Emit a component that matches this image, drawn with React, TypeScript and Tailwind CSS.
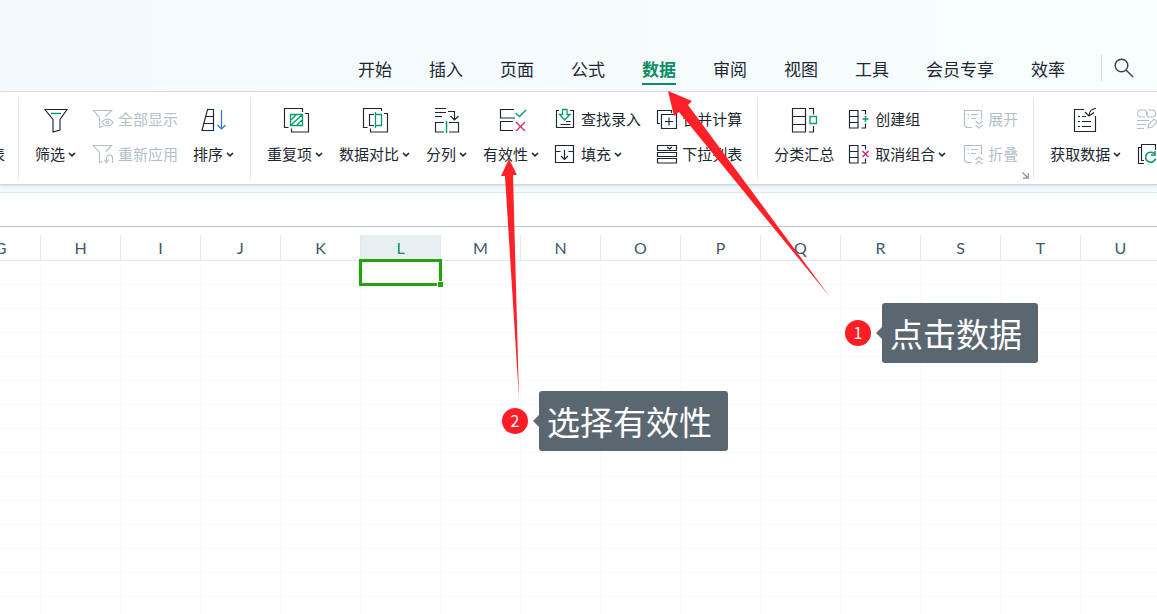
import type { ReactNode } from "react";
import clsx from "clsx";

const TABS = ["开始", "插入", "页面", "公式", "数据", "审阅", "视图", "工具", "会员专享", "效率"];
const COLUMNS = ["G", "H", "I", "J", "K", "L", "M", "N", "O", "P", "Q", "R", "S", "T", "U", "V", "W", "X", "Y", "Z"];
const ROWS = Array.from({ length: 30 }, (_, i) => i + 1);

const GREEN = "#0a9a6c";
const PINK = "#cf2a7b";

/* ---------- Icons ---------- */
function Icon({ size = 20, children }: { size?: number; children: ReactNode }) {
  return (
    <svg
      width={size}
      height={size}
      viewBox={`0 0 ${size} ${size}`}
      fill="none"
      stroke="currentColor"
      strokeWidth="1.15"
      className="shrink-0 overflow-visible"
      aria-hidden="true"
    >
      {children}
    </svg>
  );
}

function Chevron() {
  return (
    <svg width="10" height="10" viewBox="0 0 10 10" fill="none" stroke="currentColor" strokeWidth="1.6" aria-hidden="true">
      <path d="M2 4l3 2.8L8 4" />
    </svg>
  );
}

const icons = {
  filter: (
    <Icon size={26}>
      <path d="M2 2.5H24L17 12.5V23L10 25V12.5Z" />
      <path d="M8 6.5h10" stroke={GREEN} strokeWidth="1.5" />
    </Icon>
  ),
  showAll: (
    <Icon>
      <path d="M13.5 7.5L19.5 1.5h-18l6 7v10l4-1.5" />
      <path d="M10 13.5c2.5-4.5 8.5-4.5 11 0c-2.5 4.5-8.5 4.5-11 0z" />
      <circle cx="15.5" cy="13.5" r="1.5" />
    </Icon>
  ),
  reapply: (
    <Icon>
      <path d="M14 7.5L19.5 1.5h-18l6 7v10l3-1" />
      <path d="M20.5 19v-5a3 3 0 0 0-6 0v4M12 15.5l2.5 3l2.5-3" />
    </Icon>
  ),
  sort: (
    <Icon size={26}>
      <path d="M6.5 2.5H12.5V23.500H1ZM5 9.5h7.500M3 16.5h9.500" />
      <path d="M20.5 3v19M16.5 18l4 4l4-4" stroke="#2270f5" />
    </Icon>
  ),
  duplicate: (
    <Icon size={26}>
      <path d="M5.5 20.5H1.5V1.5h18V5M22 6.500h3.5v18.500H8.500v-3.5" />
      <path d="M7.5 7.5h12v11h-12zM8 13l5-5M8 18l11-10M14 18l5-5" stroke={GREEN} strokeWidth="1.300" />
    </Icon>
  ),
  compare: (
    <Icon size={26}>
      <path d="M5.5 20.500H1.5V1.500h18V4M22 6.500h3.500v18.500H8.500v-3.500M12 7.500H7.500v11H12" />
      <path d="M13.500 5v16M13.500 7.500h6v11h-6" stroke={GREEN} strokeWidth="1.300" />
    </Icon>
  ),
  split: (
    <Icon size={26}>
      <path d="M1 1.500h11M1 5.500h11M1 9.500h7M14 4.500h6.500v8M16.500 9l4 4l4-4M10 15.500H1.500v9.500H10M15 15.500h9.500v9.500H15" />
      <path d="M12.500 14v12" stroke={GREEN} strokeWidth="1.500" />
    </Icon>
  ),
  validity: (
    <Icon size={26}>
      <path d="M15 2.500H1.500v8.500H16M14 14.500H1.500v9H14" />
      <path d="M16.500 6l4 3.500l6.500-6.500" stroke={GREEN} strokeWidth="1.300" />
      <path d="M17 15l9 9M26 15l-9 9" stroke={PINK} strokeWidth="1.300" />
    </Icon>
  ),
  lookup: (
    <Icon>
      <path d="M4 1.500H1.500v17h17v-17H15M5.500 15.500h10M11 12.500h4.500" />
      <path d="M7.500 .500h4.500v5h3L9.700 11L4.500 5.500h3z" stroke={GREEN} strokeWidth="1.300" />
    </Icon>
  ),
  fill: (
    <Icon>
      <path d="M5.500 7.500H.5V1.500h18V7.500H13.500M.5 7.500v11h18v-11M9.500 6v9.500M6 12l3.500 3.500L13 12" />
    </Icon>
  ),
  consolidate: (
    <Icon>
      <path d="M4 14.500H1.500V1.500h14V4M5.500 5.500h15v14h-15zM13 8.500v8M9 12.500h8" />
    </Icon>
  ),
  dropdown: (
    <Icon>
      <path d="M1.500 1.500h19v5h-19zM1.500 8.500h19v4h-19zM1.500 14.500h19v4.500h-19zM11 3l2.500 2l2.500-2" />
    </Icon>
  ),
  subtotal: (
    <Icon size={26}>
      <path d="M1.500 1.500h13v23.500h-13zM1.500 9.500h13M1.500 17.500h13M18 1.500h4.500v6M22.500 19v6H18" />
      <path d="M19 9.500h6.500v7H19z" stroke={GREEN} strokeWidth="1.300" />
    </Icon>
  ),
  group: (
    <Icon>
      <path d="M.5 1.500h8.500v17.500H.5zM.5 7.500h8.500M.5 13.500h8.500M12.500 1.500h4v4M16.500 14.500v4.500h-4" />
      <path d="M16.500 7v6M13.500 10h6" stroke={GREEN} strokeWidth="1.500" />
    </Icon>
  ),
  ungroup: (
    <Icon>
      <path d="M.5 1.500h8.500v17.500H.5zM.5 7.500h8.500M.5 13.500h8.500M12.500 1.500h4v4M16.500 14.500v4.500h-4" />
      <path d="M13.500 7l6 6M19.500 7l-6 6" stroke={PINK} strokeWidth="1.500" />
    </Icon>
  ),
  expand: (
    <Icon>
      <path d="M10 18.500H4.500l-2-2V1.500h17V10M5.500 5.500h1.500M9 5.500h7M5.500 9.500h1.500M9 9.500h5M13.500 12l3.500 3l3.500-3M13.500 16l3.500 3l3.500-3" />
    </Icon>
  ),
  collapse: (
    <Icon>
      <path d="M10 18.500H4.500l-2-2V1.500h17V10M5.500 5.500h1.500M9 5.500h7M5.500 9.500h1.500M9 9.500h5M13.500 16l3.500-3l3.500 3M13.500 20l3.500-3l3.500 3" />
    </Icon>
  ),
  fetch: (
    <Icon size={26}>
      <path d="M11 2.500H1.500v22h21V9M23 1.500c-4 0-6.500 2.500-7 7M12 5l4 4l5-3.500" />
      <path d="M5 9.500h2M9 9.500h4M5 14.500h2M9 14.500h9M5 19.500h2M9 19.500h9" />
    </Icon>
  ),
  editLinks: (
    <Icon>
      <path d="M8 8H4a3.500 3.500 0 0 1 0-7h3a3.500 3.500 0 0 1 3 5M11 1h4a3.500 3.500 0 0 1 0 7h-4a3.500 3.500 0 0 1-1-5M0 11.500h12M0 15.500h9M0 19.500h7M11 19l1-4l5-5l3 3l-5 5z" />
    </Icon>
  ),
  refresh: (
    <Icon>
      <path d="M7 16.500H4.500V.5h14V6M4 3.500H1.500v16H7" />
      <path d="M17 9.500a5 5 0 1 0 1.500 5M18 7v4h-4" stroke={GREEN} strokeWidth="1.600" />
    </Icon>
  ),
};

/* ---------- Ribbon parts ---------- */
function LargeButton({ icon, label, menu }: { icon: ReactNode; label: string; menu?: boolean }) {
  return (
    <button type="button" className="flex flex-col items-center gap-[5px]">
      <span className="flex h-[30px] items-center pt-0.5">{icon}</span>
      <span className="flex h-[30px] items-center gap-0.5 whitespace-nowrap">
        {label}
        {menu && <Chevron />}
      </span>
    </button>
  );
}

function SmallButton({ icon, label, menu, disabled }: { icon: ReactNode; label: string; menu?: boolean; disabled?: boolean }) {
  return (
    <button
      type="button"
      disabled={disabled}
      className={clsx("flex h-[30px] items-center whitespace-nowrap", disabled && "text-[#b3bfc9]")}
    >
      <span className="mr-1.5">{icon}</span>
      {label}
      {menu && <span className="ml-0.5"><Chevron /></span>}
    </button>
  );
}

function Stack({ children }: { children: ReactNode }) {
  return <div className="flex shrink-0 flex-col gap-[5px]">{children}</div>;
}

function Group({ children }: { children: ReactNode }) {
  return (
    <div className="relative flex shrink-0 gap-[15px] border-r border-[#e1e8ee] pt-[7px] pr-[15px] pl-4">{children}</div>
  );
}

function Ribbon() {
  return (
    <div className="flex h-[93px] shrink-0 overflow-hidden border-b border-[#cbd8e2] bg-white py-[5px] text-[15px] text-[#1d2733] shadow-sm">
      <div className="flex w-[19px] shrink-0 items-end justify-end overflow-hidden border-r border-[#e1e8ee] pr-[13px] pb-[10px]">
        <button type="button" className="h-[30px] whitespace-nowrap">表</button>
      </div>
      <Group>
        <LargeButton icon={icons.filter} label="筛选" menu />
        <Stack>
          <SmallButton icon={icons.showAll} label="全部显示" disabled />
          <SmallButton icon={icons.reapply} label="重新应用" disabled />
        </Stack>
        <LargeButton icon={icons.sort} label="排序" menu />
      </Group>
      <Group>
        <LargeButton icon={icons.duplicate} label="重复项" menu />
        <LargeButton icon={icons.compare} label="数据对比" menu />
        <LargeButton icon={icons.split} label="分列" menu />
        <LargeButton icon={icons.validity} label="有效性" menu />
        <Stack>
          <SmallButton icon={icons.lookup} label="查找录入" />
          <SmallButton icon={icons.fill} label="填充" menu />
        </Stack>
        <Stack>
          <SmallButton icon={icons.consolidate} label="合并计算" />
          <SmallButton icon={icons.dropdown} label="下拉列表" />
        </Stack>
      </Group>
      <Group>
        <LargeButton icon={icons.subtotal} label="分类汇总" />
        <Stack>
          <SmallButton icon={icons.group} label="创建组" />
          <SmallButton icon={icons.ungroup} label="取消组合" menu />
        </Stack>
        <Stack>
          <SmallButton icon={icons.expand} label="展开" disabled />
          <SmallButton icon={icons.collapse} label="折叠" disabled />
        </Stack>
        <button type="button" aria-label="分级显示设置" className="absolute right-1 bottom-0 text-[#8492a0]">
          <svg width="7" height="7" viewBox="0 0 7 7" fill="none" stroke="currentColor" strokeWidth="1.2">
            <path d="M.5 .5l5.500 5.500M6.200 1v5.200H1" />
          </svg>
        </button>
      </Group>
      <div className="flex shrink-0 gap-[15px] pt-[7px] pl-4">
        <LargeButton icon={icons.fetch} label="获取数据" menu />
        <Stack>
          <button type="button" disabled aria-label="编辑链接" className="flex h-[30px] items-center text-[#b3bfc9]">{icons.editLinks}</button>
          <button type="button" aria-label="全部刷新" className="flex h-[30px] items-center">{icons.refresh}</button>
        </Stack>
      </div>
    </div>
  );
}

/* ---------- Sheet ---------- */
function Sheet() {
  return (
    <div className="min-h-0 flex-1 overflow-hidden bg-white pt-2">
      <table className="-ml-[39px] w-[1600px] table-fixed border-separate border-spacing-0">
        <thead>
          <tr>
            {COLUMNS.map((col) => (
              <th
                key={col}
                scope="col"
                className={clsx(
                  "h-[26px] w-20 border-r border-b border-[#e0e9ef] p-0 text-center font-[Lato,sans-serif] text-base font-normal",
                  col === "L" ? "bg-[#e8eff3] text-[#0a8f64]" : "text-[#46566a]"
                )}
              >
                {col}
              </th>
            ))}
          </tr>
        </thead>
        <tbody>
          {ROWS.map((row) => (
            <tr key={row}>
              {COLUMNS.map((col) => (
                <td key={col} className="relative h-6 border-r border-b border-[#f4fafd] p-0">
                  {col === "L" && row === 1 && (
                    <div className="absolute -top-0.5 -right-0.5 -bottom-0.5 -left-0.5 z-10 border-3 border-[#22a30a]">
                      <span className="absolute -right-1 -bottom-1 h-1.5 w-1.5 border-t border-l border-white bg-[#22a30a]" />
                    </div>
                  )}
                </td>
              ))}
            </tr>
          ))}
        </tbody>
      </table>
    </div>
  );
}

/* ---------- Annotations ---------- */
function Callout({ step, text, className }: { step: number; text: string; className: string }) {
  return (
    <div className={clsx("absolute z-20 flex items-center", className)}>
      <span className="flex h-[26px] w-[26px] items-center justify-center rounded-full bg-[#ff1c24] pb-0.5 text-base text-white">{step}</span>
      <svg width="6" height="12" viewBox="0 0 6 12" className="ml-[5px]" aria-hidden="true">
        <path d="M6 0v12L0 6z" fill="#5d6a74" />
      </svg>
      <span className="flex h-[60px] items-center whitespace-nowrap rounded-[3px] bg-[#485662]/90 pt-0.5 pr-4 pl-2 text-[33px] text-white">
        {text}
      </span>
    </div>
  );
}

function Arrows() {
  return (
    <svg width="860" height="420" viewBox="0 0 860 420" className="pointer-events-none absolute top-0 left-0 z-20" fill="#ff2127" aria-hidden="true">
      <path d="M668 91L692 101L688 105L830 297L679 112L674 116Z" />
      <path d="M509 159L517 175L513 175L519 399L505 176L501 176Z" />
    </svg>
  );
}

export default function App() {
  return (
    <div className="relative flex h-screen w-full flex-col overflow-hidden bg-[#f3f9fd] font-['Noto_Sans_CJK_SC',sans-serif]">
      <header className="flex h-[92px] shrink-0 items-end border-b border-[#d5e0ea] bg-linear-to-r from-[#f3f9fd] to-[#f8fdfe] pl-[358px] text-[17px] text-[#1d2733]">
        <nav role="tablist" className="flex shrink-0 gap-[37px]">
          {TABS.map((tab) => (
            <button
              key={tab}
              type="button"
              role="tab"
              aria-selected={tab === "数据"}
              className={clsx(
                "mb-1.5 h-[30px] whitespace-nowrap border-b-2 leading-7",
                tab === "数据" ? "border-[#0a8f64] font-bold text-[#0a8f64]" : "border-transparent"
              )}
            >
              {tab}
            </button>
          ))}
        </nav>
        <div className="mb-[10px] ml-9 h-[26px] shrink-0 border-l border-[#cfd8df] pl-3">
          <button type="button" aria-label="搜索" className="flex h-[26px] items-center">
            <svg width="20" height="20" viewBox="0 0 20 20" fill="none" stroke="#36434f" strokeWidth="1.4">
              <circle cx="7.5" cy="7.5" r="6.3" />
              <path d="M12 12l7 7" />
            </svg>
          </button>
        </div>
      </header>

      <Ribbon />

      <input aria-label="编辑栏" className="mt-[7px] h-[35px] w-full shrink-0 border-t border-b border-t-[#dce6ed] border-b-[#bdc7cf] bg-white px-2 outline-none" />

      <Sheet />
      <Arrows />
      <Callout step={1} text="点击数据" className="top-[303px] left-[845px]" />
      <Callout step={2} text="选择有效性" className="top-[391px] left-[502px]" />
    </div>
  );
}
